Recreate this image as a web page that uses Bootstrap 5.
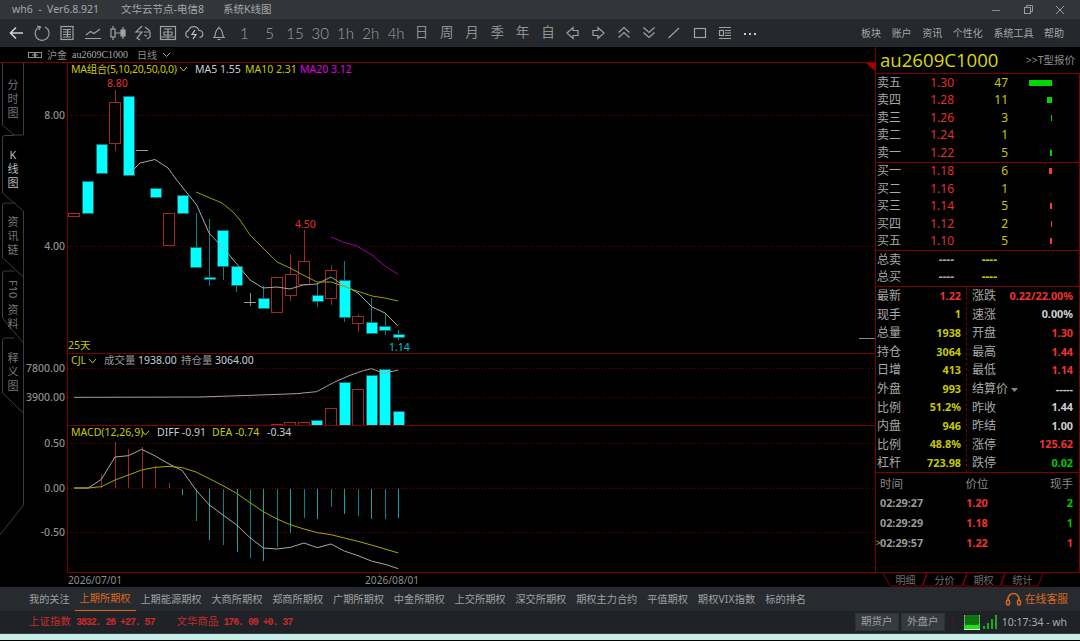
<!DOCTYPE html>
<html lang="zh">
<head>
<meta charset="utf-8">
<title>wh6</title>
<link href="https://cdn.jsdelivr.net/npm/bootstrap@5.3.0/dist/css/bootstrap.min.css" rel="stylesheet">
<style>
html,body{height:641px;overflow:hidden;background:#000;}
body{font-family:"Noto Sans","Noto Sans CJK SC",sans-serif;font-size:12px;line-height:1;color:#aaa;}
.app{height:641px;width:1080px;}
.tbar{height:19px;background:#32363b;font-size:10.5px;color:#a6a6a6;padding-left:12px;}
.tbar .t2{margin-left:22px}
.tbar .t3{margin-left:19px}
.win{width:32px;text-align:center}
.tools{height:28px;background:#25282c;color:#929292;padding-left:4px;}
.tool{width:25.3px;display:flex;justify-content:center;align-items:center;height:28px;font-size:13.5px;}
.tool svg{display:block;fill:none;stroke:#a0a0a0;stroke-width:1.2}
.tool.num{font-family:"Lato",sans-serif;font-weight:300;font-size:15px;color:#a0a0a0}
.menu{font-size:10px;color:#a6a6a6;gap:10.6px;padding-right:16px;}
.mainrow{height:540px;background:#000;}
.left{width:875px;}
.chead{height:16px;border-bottom:1px solid #7f0000;padding-left:28px;font-size:10px;color:#8d8d8d;gap:5px;}
.chead .sym{font-family:"Liberation Serif",serif;font-size:10px;color:#aaa}
.rail{width:24px;height:524px;position:relative;font-size:11px;color:#777;text-align:center;line-height:14px;padding-left:2px;flex:none;}
.rail>svg{position:absolute;left:0;top:0}
.rtab{position:relative;}
.rtab.on{color:#bdbdbd}
.rt1{height:73px;padding-top:15px}
.rt2,.rt3{height:67px;padding-top:12px}
.rt4{height:73px;padding-top:10px}
.rt5{height:70px;padding-top:8px}
.vert{writing-mode:vertical-rl;display:inline-block;line-height:14px;margin-bottom:2px}
.chartsvg{display:block}
.chartsvg text{font-family:"Noto Sans","Noto Sans CJK SC",sans-serif;font-size:10.5px}
.chartsvg text.maset{letter-spacing:-.3px}
.chartsvg text.dt{font-size:10.2px}
.quote{width:205px;flex:none;}
.qhead{height:26px;padding-left:4px;padding-right:5px;border-left:1px solid #7f0000;}
.qname{font-family:"Open Sans",sans-serif;font-size:18.600px;color:#d9d900;}
.qlink{font-size:10.500px;color:#8f8f8f;}
.qbody{border:1px solid #7f0000;}
.qsec{border-bottom:1px solid #7f0000;}
.orow{display:grid;grid-template-columns:43px 34px 54px 44px;height:17.5px;align-items:center;padding-left:1px;}
.olab{color:#a8a8a8}
.pr{color:#e03030;text-align:right}
.qty{color:#c8c800;text-align:right}
.dash1{color:#aaa;text-align:right;font-weight:700;}
.dash2{color:#c8c800;text-align:right;font-weight:700;}
.barcell{display:flex;justify-content:flex-end}
.bar-g{background:#00d800;}
.bar-r{background:#ff3838;}
.stats{height:186px;}
.scol1{width:91px;border-right:1px dashed #7f0000;padding:0 5px 0 1px;flex:none}
.scol2{flex:1;padding:0 6px 0 5px}
.srow{height:18.55px;}
.slab{color:#a8a8a8}
.sv{font-weight:700;font-size:10.800px}
.cy{color:#c8c800}.cr{color:#f03232}.cw{color:#cfcfcf}.cg{color:#00c800}
.ticks{height:99px;font-weight:700;}
.trow{display:grid;grid-template-columns:79px 36px 1fr;height:20px;align-items:center;padding:0 6px 0 4px;position:relative}
.thead{color:#8a8a8a;font-weight:400;padding-top:1px;font-size:11.5px}
.tp{text-align:center}.tq{text-align:right}
.tt{color:#9a9a9a}
.cur{position:absolute;left:0;color:#c8c800;font-weight:400;font-size:8px}
.qtabs{height:14px;position:relative;font-size:10px;color:#6f6f6f;padding-left:11px;}
.qtabs>svg{position:absolute;left:0;top:0}
.qtabs span{width:39px;text-align:center;position:relative}
.tabsbar{height:24px;background:#272b30;padding-left:24px;font-size:10.2px;color:#a0a0a0;}
.tb-i{padding:0 5px;height:24px;display:flex;align-items:center;margin-right:-.15px}
.tb-i.on{color:#d8691c;border-bottom:1px solid #d8691c;}
.tb-i.wide{letter-spacing:.2px}
.svc{color:#d8691c;font-size:10.8px;padding-right:12px;gap:3px}
.statusbar{height:23px;background:#1f2327;border-bottom:1px solid #3a3e42;padding-left:29px;font-size:10.3px;}
.idx{color:#c92a2a;letter-spacing:.2px}
.idx b{font-family:"Liberation Mono",monospace;font-size:10px;font-weight:700;margin-left:5px;letter-spacing:-1.1px}
.idx2{margin-left:22px}
.sbtn{background:#363b41;color:#a0a0a0;font-size:10.5px;height:18px;width:44px;display:flex;align-items:center;justify-content:center;border:1px solid #2e3237;border-radius:0;padding:0}
.sbtn+.sbtn{margin-left:2px}
.clock{font-size:10.5px;color:#aaa;padding-right:13px;margin-left:5px}
.sep{width:1px;height:13px;background:#5a1414;margin:0 10px 0 8px}
.sig{margin-left:3px}
.strip{height:6px;background:#c6eee9;}
</style>
</head>
<body>
<div class="app d-flex flex-column">
  <div class="tbar d-flex align-items-center">
    <span>wh6&nbsp;&nbsp;-&nbsp;&nbsp;Ver6.8.921</span><span class="t2">文华云节点-电信8</span><span class="t3">系统K线图</span>
    <div class="ms-auto d-flex pe-1">
      <span class="win"><svg width="10" height="10"><path d="M1 5.5H9" stroke="#888"/></svg></span>
      <span class="win"><svg width="10" height="10" fill="none" stroke="#999"><rect x="1.5" y="2.5" width="6" height="6"/><path d="M3.5 2V.5H9.5V6.5H8"/></svg></span>
      <span class="win"><svg width="10" height="10" stroke="#999"><path d="M1 1L9 9M9 1L1 9"/></svg></span>
    </div>
  </div>
  <div class="tools d-flex align-items-center">
    <div class="tool"><svg width="18" height="18"><path d="M15 9H3M8 3.5L2.5 9L8 14.5" stroke="#d0d0d0" stroke-width="1.6"/></svg></div>
    <div class="tool"><svg width="18" height="18"><path d="M7 2.7A7 7 0 1 0 12 3" /><path d="M4 2L7.5 2.8L6 6"/></svg></div>
    <div class="tool"><svg width="18" height="18"><rect x="3" y="2.5" width="12" height="13"/><path d="M5 5.5H13M5 8H13M5 10.5H13M5 13H13M9.5 5.5V13"/></svg></div>
    <div class="tool"><svg width="20" height="18"><path d="M3 11L7.5 7.5L11 9.5L17 5M2 14.5H18"/></svg></div>
    <div class="tool"><svg width="20" height="18"><rect x="3" y="5" width="4" height="8"/><rect x="13" y="6" width="4" height="6" fill="#a0a0a0"/><path d="M5 2V5M5 13V16M15 3V6M15 12V15M7 9H13"/></svg></div>
    <div class="tool"><svg width="20" height="18"><path d="M9 2L3 8H9L4 14L7 16M12 3L17 7M11 8H17V13L14 15M11 11L14 12"/></svg></div>
    <div class="tool"><svg width="20" height="18"><rect x="2.5" y="2.5" width="15" height="13"/><path d="M6 5H14M6 8H14V11H6ZM10 5V15M3 13H17"/></svg></div>
    <div class="tool"><svg width="20" height="18"><path d="M5 13.5A3.5 3.5 0 0 1 4.5 6.6A5.5 5.5 0 0 1 15 6.5A3.5 3.5 0 0 1 15.5 13.5"/><path d="M11 6L8 10.5H12L9 15" stroke="#c8c8c8"/></svg></div>
    <div class="tool"><svg width="18" height="18"><path d="M3 13.5H15M4.5 13.5C5.5 12 5 5 9 4C13 5 12.5 12 13.5 13.5M9 2.5V4M7.5 15.5H10.5"/></svg></div>
    <div class="tool num">1</div><div class="tool num">5</div><div class="tool num">15</div><div class="tool num">30</div><div class="tool num">1h</div><div class="tool num">2h</div><div class="tool num">4h</div>
    <div class="tool">日</div><div class="tool">周</div><div class="tool">月</div><div class="tool">季</div><div class="tool">年</div><div class="tool">自</div>
    <div class="tool"><svg width="18" height="18"><path d="M3 9L9 3.5V6.5H14V11.5H9V14.5Z"/></svg></div>
    <div class="tool"><svg width="18" height="18"><path d="M15 9L9 3.5V6.5H4V11.5H9V14.5Z"/></svg></div>
    <div class="tool"><svg width="18" height="18"><path d="M3.5 8.5L9 3.5L14.5 8.5M3.5 13.5L9 8.5L14.5 13.5"/></svg></div>
    <div class="tool"><svg width="18" height="18"><path d="M3.5 3.5L9 8.5L14.5 3.5M3.5 8.5L9 13.5L14.5 8.5"/></svg></div>
    <div class="tool"><svg width="18" height="18"><path d="M3.5 14L14 4"/></svg></div>
    <div class="tool"><svg width="18" height="18"><rect x="3.5" y="4.5" width="11" height="9"/></svg></div>
    <div class="tool"><svg width="18" height="18"><path d="M3 3.5H15M9 6.5H15M9 9H15M9 11.5H15M3 14.5H15"/><rect x="3.5" y="6.5" width="4" height="5"/></svg></div>
    <div class="tool"><svg width="18" height="18"><path d="M3 10H5M8 10H10M13 10H15" stroke="#c8c8c8" stroke-width="2"/></svg></div>
    <div class="menu ms-auto d-flex align-items-center">
      <span>板块</span><span>账户</span><span>资讯</span><span>个性化</span><span>系统工具</span><span>帮助</span>
    </div>
  </div>
  <div class="mainrow d-flex">
    <div class="left d-flex flex-column">
      <div class="chead d-flex align-items-center">
        <svg width="14" height="8" fill="none" stroke="#8d8d8d"><rect x=".5" y="1.5" width="6" height="5"/><rect x="7.5" y="1.5" width="6" height="5"/><path d="M4 4H10"/></svg>
        <span>沪金</span><span class="sym">au2609C1000</span><span class="ms-1">日线</span>
        <svg width="9" height="6" fill="none" stroke="#aaa"><path d="M1 1L4.5 4.5L8 1"/></svg>
      </div>
      <div class="d-flex">
        <div class="rail">
          <svg width="24" height="524" fill="none" stroke="#3d3d3d">
            <path d="M2.5 0V62L14 72H23.5V0"/>
            <path d="M14 72.5H5Q2.5 72.500 2.5 75V130L23.500 148"/>
            <path d="M14.500 140H5Q2.5 140 2.5 142.500V195L23.500 214V148"/>
            <path d="M14.500 208H5Q2.5 208 2.5 210.500V255L23.500 280V214"/>
            <path d="M14.500 275H5Q2.5 275 2.5 277.500V330L23.500 350M23.500 280V442L0 472"/>
          </svg>
          <div class="rtab rt1">分<br>时<br>图</div>
          <div class="rtab rt2 on">K<br>线<br>图</div>
          <div class="rtab rt3">资<br>讯<br>链</div>
          <div class="rtab rt4"><span class="vert">F10</span><br>资<br>料</div>
          <div class="rtab rt5">释<br>义<br>图</div>
        </div>
        <svg class="chartsvg" id="chart" width="851" height="524" viewBox="24 63 851 524" xmlns="http://www.w3.org/2000/svg">
          <g id="cg"></g>
          <g text-anchor="end" fill="#8f8f8f" font-weight="500">
            <text x="65" y="119">8.00</text><text x="65" y="250">4.00</text>
            <text x="65" y="372">7800.00</text><text x="65" y="401">3900.00</text>
            <text x="65" y="447">0.50</text><text x="65" y="492">0.00</text><text x="65" y="536">-0.50</text>
          </g>
          <text class="maset" x="71" y="73" fill="#c8c800">MA组合(5,10,20,50,0,0)</text>
          <path d="M180 67L183.5 71L187 67" stroke="#c8c800" fill="none"/>
          <text x="195" y="73" fill="#c8ccd8">MA5 1.55</text>
          <text x="245" y="73" fill="#c8c800">MA10 2.31</text>
          <text x="300" y="73" fill="#e000e0">MA20 3.12</text>
          <text x="107" y="87" fill="#e03030">8.80</text>
          <text x="295" y="228" fill="#e03030">4.50</text>
          <text x="389" y="351" fill="#00c8c8">1.14</text>
          <text x="68" y="349" fill="#c8c800">25天</text>
          <text x="71" y="364" fill="#c8c800">CJL</text>
          <path d="M89 359L92.500 363L96 359" stroke="#c8c800" fill="none"/>
          <text x="104" y="364" fill="#999">成交量</text><text x="138" y="364" fill="#c8ccd8">1938.00</text>
          <text x="181" y="364" fill="#999">持仓量</text><text x="215" y="364" fill="#c8ccd8">3064.00</text>
          <text x="71" y="436" fill="#c8c800">MACD(12,26,9)</text>
          <path d="M142 431L145.500 435L149 431" stroke="#c8c800" fill="none"/>
          <text x="157" y="436" fill="#c8ccd8">DIFF -0.91</text>
          <text x="212" y="436" fill="#c8c800">DEA -0.74</text>
          <text x="267" y="436" fill="#c8ccd8">-0.34</text>
          <text class="dt" x="68" y="584" fill="#8f8f8f">2026/07/01</text>
          <text class="dt" x="365" y="584" fill="#8f8f8f">2026/08/01</text>
        </svg>
      </div>
    </div>
    <div class="quote d-flex flex-column">
      <div class="qhead d-flex align-items-center justify-content-between">
        <span class="qname">au2609C1000</span><span class="qlink">&gt;&gt;T型报价</span>
      </div>
      <div class="qbody">
        <div class="qsec">
          <div class="orow"><span class="olab">卖五</span><span class="pr">1.30</span><span class="qty">47</span><span class="barcell"><i class="bar-g" style="width:23px;height:6px"></i></span></div>
          <div class="orow"><span class="olab">卖四</span><span class="pr">1.28</span><span class="qty">11</span><span class="barcell"><i class="bar-g" style="width:5px;height:6px"></i></span></div>
          <div class="orow"><span class="olab">卖三</span><span class="pr">1.26</span><span class="qty">3</span><span class="barcell"><i class="bar-g" style="width:1px;height:6px"></i></span></div>
          <div class="orow"><span class="olab">卖二</span><span class="pr">1.24</span><span class="qty">1</span><span class="barcell"></span></div>
          <div class="orow"><span class="olab">卖一</span><span class="pr">1.22</span><span class="qty">5</span><span class="barcell"><i class="bar-g" style="width:2px;height:6px"></i></span></div>
        </div>
        <div class="qsec">
          <div class="orow"><span class="olab">买一</span><span class="pr">1.18</span><span class="qty">6</span><span class="barcell"><i class="bar-r" style="width:3px;height:6px"></i></span></div>
          <div class="orow"><span class="olab">买二</span><span class="pr">1.16</span><span class="qty">1</span><span class="barcell"></span></div>
          <div class="orow"><span class="olab">买三</span><span class="pr">1.14</span><span class="qty">5</span><span class="barcell"><i class="bar-r" style="width:2px;height:6px"></i></span></div>
          <div class="orow"><span class="olab">买四</span><span class="pr">1.12</span><span class="qty">2</span><span class="barcell"><i class="bar-r" style="width:1px;height:6px"></i></span></div>
          <div class="orow"><span class="olab">买五</span><span class="pr">1.10</span><span class="qty">5</span><span class="barcell"><i class="bar-r" style="width:2px;height:6px"></i></span></div>
        </div>
        <div class="qsec">
          <div class="orow"><span class="olab">总卖</span><span class="dash1">----</span><span class="dash2" style="padding-right:11px">----</span><span></span></div>
          <div class="orow"><span class="olab">总买</span><span class="dash1">----</span><span class="dash2" style="padding-right:11px">----</span><span></span></div>
        </div>
        <div class="qsec stats d-flex">
          <div class="scol1">
            <div class="srow d-flex justify-content-between align-items-center"><span class="slab">最新</span><span class="sv cr">1.22</span></div>
            <div class="srow d-flex justify-content-between align-items-center"><span class="slab">现手</span><span class="sv cy">1</span></div>
            <div class="srow d-flex justify-content-between align-items-center"><span class="slab">总量</span><span class="sv cy">1938</span></div>
            <div class="srow d-flex justify-content-between align-items-center"><span class="slab">持仓</span><span class="sv cy">3064</span></div>
            <div class="srow d-flex justify-content-between align-items-center"><span class="slab">日增</span><span class="sv cy">413</span></div>
            <div class="srow d-flex justify-content-between align-items-center"><span class="slab">外盘</span><span class="sv cy">993</span></div>
            <div class="srow d-flex justify-content-between align-items-center"><span class="slab">比例</span><span class="sv cy">51.2%</span></div>
            <div class="srow d-flex justify-content-between align-items-center"><span class="slab">内盘</span><span class="sv cy">946</span></div>
            <div class="srow d-flex justify-content-between align-items-center"><span class="slab">比例</span><span class="sv cy">48.8%</span></div>
            <div class="srow d-flex justify-content-between align-items-center"><span class="slab">杠杆</span><span class="sv cy">723.98</span></div>
          </div>
          <div class="scol2">
            <div class="srow d-flex justify-content-between align-items-center"><span class="slab">涨跌</span><span class="sv cr">0.22/22.00%</span></div>
            <div class="srow d-flex justify-content-between align-items-center"><span class="slab">速涨</span><span class="sv cw">0.00%</span></div>
            <div class="srow d-flex justify-content-between align-items-center"><span class="slab">开盘</span><span class="sv cr">1.30</span></div>
            <div class="srow d-flex justify-content-between align-items-center"><span class="slab">最高</span><span class="sv cr">1.44</span></div>
            <div class="srow d-flex justify-content-between align-items-center"><span class="slab">最低</span><span class="sv cr">1.14</span></div>
            <div class="srow d-flex justify-content-between align-items-center"><span class="slab">结算价 <svg width="7" height="4"><path d="M0 0H7L3.500 4Z" fill="#888"/></svg></span><span class="sv cw">-----</span></div>
            <div class="srow d-flex justify-content-between align-items-center"><span class="slab">昨收</span><span class="sv cw">1.44</span></div>
            <div class="srow d-flex justify-content-between align-items-center"><span class="slab">昨结</span><span class="sv cw">1.00</span></div>
            <div class="srow d-flex justify-content-between align-items-center"><span class="slab">涨停</span><span class="sv cr">125.62</span></div>
            <div class="srow d-flex justify-content-between align-items-center"><span class="slab">跌停</span><span class="sv cg">0.02</span></div>
          </div>
        </div>
        <div class="ticks">
          <div class="trow thead"><span>时间</span><span class="tp">价位</span><span class="tq">现手</span></div>
          <div class="trow sv"><span class="tt">02:29:27</span><span class="tp cr">1.20</span><span class="tq cg">2</span></div>
          <div class="trow sv"><span class="tt">02:29:29</span><span class="tp cr">1.18</span><span class="tq cg">1</span></div>
          <div class="trow sv"><span class="cur">&gt;</span><span class="tt">02:29:57</span><span class="tp cr">1.22</span><span class="tq cr">1</span></div>
        </div>
      </div>
      <div class="qtabs d-flex align-items-center flex-grow-1">
        <svg width="205" height="15" fill="none" stroke="#7f0000"><path d="M8 0L15 13H47L52 0M52 0L48 13H87L92 0M92 0L88 13H125L130 0M130 0L126 13H163L168 0"/></svg>
        <span>明细</span><span>分价</span><span>期权</span><span>统计</span>
      </div>
    </div>
  </div>
  <div class="tabsbar d-flex align-items-center">
    <span class="tb-i">我的关注</span><span class="tb-i on">上期所期权</span><span class="tb-i">上期能源期权</span><span class="tb-i">大商所期权</span><span class="tb-i">郑商所期权</span><span class="tb-i">广期所期权</span><span class="tb-i">中金所期权</span><span class="tb-i">上交所期权</span><span class="tb-i">深交所期权</span><span class="tb-i">期权主力合约</span><span class="tb-i">平值期权</span><span class="tb-i wide">期权VIX指数</span><span class="tb-i">标的排名</span>
    <div class="svc ms-auto d-flex align-items-center">
      <svg width="17" height="15" fill="none" stroke="#d8691c" stroke-width="1.500"><path d="M3 9V7A5.500 5.500 0 0 1 14 7V9"/><rect x="1.500" y="8" width="3" height="5" rx="1.500"/><rect x="12.500" y="8" width="3" height="5" rx="1.500"/></svg>
      <span>在线客服</span>
    </div>
  </div>
  <div class="statusbar d-flex align-items-center">
    <span class="idx">上证指数<b>3832. 26 +27. 57</b></span>
    <span class="idx idx2">文华商品<b>176. 09 +0. 37</b></span>
    <div class="ms-auto d-flex align-items-center">
      <button class="sbtn btn" type="button">期货户</button>
      <button class="sbtn btn" type="button">外盘户</button>
      <i class="sep"></i>
      <svg width="16" height="15"><rect width="16" height="15" fill="#e6f7e6"/><rect width="15" height="10" x=".5" fill="#0b7d0b"/><path d="M0 2.500H16M0 5H16M0 7.500H16M3 0V10M6 0V10M9 0V10M12 0V10" stroke="#1c5c1c" stroke-width=".5"/><rect y="10" width="16" height="4" fill="#20e020"/></svg>
      <svg class="sig" width="14" height="14" fill="#20a820"><rect x="0" y="11" width="2" height="3"/><rect x="4" y="8" width="2" height="6"/><rect x="8" y="4" width="2" height="10"/><rect x="12" y="0" width="2" height="14"/></svg>
      <span class="clock">10:17:34 - wh</span>
    </div>
  </div>
  <div class="strip"></div>
</div>
<script>
const NS='http://www.w3.org/2000/svg',g=document.getElementById('cg');
function el(n,a){const e=document.createElementNS(NS,n);for(const k in a)e.setAttribute(k,a[k]);g.appendChild(e);return e;}
const RED='#a02828',TEAL='#0a6a70',FR='#7f0000';
function ln(x1,y1,x2,y2,c,ex){el('line',Object.assign({x1,y1,x2,y2,stroke:c,'shape-rendering':'crispEdges'},ex||{}));}
[115.5,246.5,368.5,397.5,443.5,488.5,532.5].forEach(y=>ln(68,y,875,y,'#6a0000',{'stroke-dasharray':'1 2'}));
ln(67.5,63,67.5,573,FR);ln(68,353.5,875,353.5,FR);ln(68,425.5,875,425.5,FR);ln(68,572.5,875,572.5,FR);ln(379.5,572,379.5,576,FR);
el('polygon',{points:'866,63 875,63 875,71',fill:'#a80000'});
ln(859,338.500,875,338.500,'#8a8a8a');
const c=[[74,213.5,216.5,0,0,'r'],[88,181,213,0,0,'c'],[101.500,144,172.500,0,0,'c'],[115,102.500,143.500,90,151,'r'],[128.500,96.500,175,0,0,'c'],[142,150,150,0,0,'d'],[155.500,188.500,197.500,0,0,'c'],[169,213.500,245.500,0,0,'r'],[182.500,195.500,213.500,0,0,'c'],[196,247.500,267.500,213,247,'c'],[209.500,277,279,219,286,'c'],[223,230.500,266.500,266,280,'c'],[236.500,266.500,285.500,285,292,'c'],[250,302,302,293,306,'d'],[263.500,298.500,308.500,286,298,'c'],[277,277.500,312,0,0,'r'],[290.500,274,295,254,300.500,'r'],[304,261,284,230,261,'r'],[317.500,295,300.500,283,307,'c'],[331,270.500,298.500,265,305,'r'],[344.500,280.500,317.500,261,322,'c'],[358,316.500,323.500,314,332,'r'],[371.500,322,332.500,298,334,'c'],[385,326,330,313,335,'c'],[398.500,334.500,337.500,330,340,'c']];
c.forEach(([x,t,b,wt,wb,k])=>{
  const col=k=='r'?RED:k=='c'?TEAL:'#8a8a8a';
  if(wt)ln(Math.floor(x)+.5,wt,Math.floor(x)+.5,wb,k=='c'?'#0e7f85':col);
  if(k=='d'){ln(x-6,t+.5,x+6,t+.5,'#9a9a9a');return;}
  el('rect',{x:Math.floor(x-5.5)+.5,y:Math.floor(t)+.5,width:11,height:Math.max(1,Math.round(b-t)),fill:k=='c'?'#00ffff':'#000',stroke:col,'shape-rendering':'crispEdges'});
});
function pl(p,c,w){el('polyline',{points:p.map(a=>a.join(',')).join(' '),fill:'none',stroke:c,'stroke-width':w||1});}
pl([[128,175],[140,163],[155,159.500],[168,168],[176.700,180],[196.700,205],[209,233],[226.700,251.700],[250,280],[263,288],[277,287],[290,289],[303,285],[317,284],[331,277],[343,285],[358,293],[372,307],[385,313],[398,326]],'#a8a8a8');
pl([[196,192],[222,203],[233,212],[240,220],[250,235],[263,248],[277,262],[290,268],[303,275],[317,282],[331,282],[343,286],[357,291],[372,296],[385,298],[398,301]],'#9c9c00');
pl([[331,237],[343,242],[357,246],[372,255],[385,266],[398,274]],'#a000a0');
const sc=a=>a.map(([x,y])=>[x/3,y/3+350]);
[[652,224,TEAL],[772,224,TEAL],[813,223,RED],[853,217,RED],[894,217,RED],[934,211,'c'],[975,175,RED],[1016,96,'c'],[1056,118,RED],[1097,75,'c'],[1137,56,'c'],[1178,184,'c']].forEach(([x,t,k])=>{
  const X=Math.round(x/3)+.5,Y=Math.round(t/3+350)+.5;
  el('rect',{x:X,y:Y,width:11,height:425-Y,fill:k=='c'?'#00ffff':'#000',stroke:k=='c'?TEAL:k,'shape-rendering':'crispEdges'});
});
ln(68,425.500,875,425.500,FR);
pl(sc([[222,142],[600,141],[690,138],[810,134],[890,131],[950,125],[1000,98],[1050,76],[1090,62],[1115,56],[1150,70],[1195,60]]),'#a0a0a0');
[[304,372],[345,276],[385,297],[425,292],[466,347],[507,400]].forEach(([x,t])=>{const X=Math.round(x/3)+.5;ln(X,t/3+350,X,488,RED);});
[[547,436],[588,513],[628,570],[669,585],[710,606],[750,624],[790,632],[831,590],[871,550],[912,503],[952,507],[993,471],[1033,492],[1074,497],[1114,508],[1155,507],[1195,503]].forEach(([x,t],i)=>{const X=Math.round(x/3)+.5;ln(X,489,X,t/3+350,i%2?'#0e7f85':'#10a0a8');});
pl(sc([[222,414],[265,414],[304,388],[345,321],[385,317],[425,298],[466,318],[507,342],[547,362],[588,420],[628,465],[669,495],[710,525],[750,563],[790,594],[831,597],[871,592],[912,579],[952,593],[993,582],[1033,603],[1074,617],[1114,633],[1155,643],[1195,656]]),'#a8a8a8');
pl(sc([[222,414],[265,414],[304,410],[345,390],[385,375],[425,360],[466,352],[507,349],[547,353],[588,366],[628,386],[669,407],[710,430],[750,458],[790,485],[831,507],[871,524],[912,537],[952,548],[993,554],[1033,564],[1074,574],[1114,585],[1155,597],[1195,609]]),'#a8a800');
</script>
<script src="https://cdn.jsdelivr.net/npm/bootstrap@5.3.0/dist/js/bootstrap.bundle.min.js"></script>
</body>
</html>
